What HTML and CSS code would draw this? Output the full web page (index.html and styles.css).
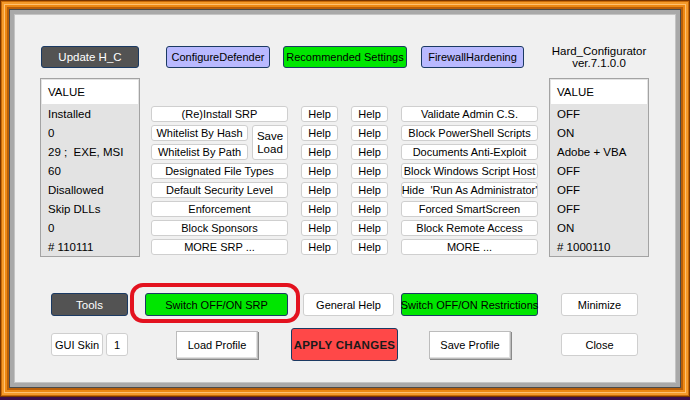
FILE: index.html
```html
<!DOCTYPE html>
<html lang="en">
<head>
    <meta charset="UTF-8">
    <title>Hard_Configurator</title>
    <link rel="stylesheet" href="styles.css">
</head>
<body>
    <div class="window">
        <div class="client">
            <div class="main">
                <div class="btn dark update">Update H_C</div>
                <div class="topbar">
                    <div class="btn lilac w-def">ConfigureDefender</div>
                    <div class="btn green w-rec">Recommended Settings</div>
                    <div class="btn lilac w-fw">FirewallHardening</div>
                </div>
                <div class="title">Hard_Configurator<br>ver.7.1.0.0</div>

                <ul class="list">
                    <li class="head">VALUE</li>
                    <li>Installed</li>
                    <li>0</li>
                    <li>29 ;&nbsp; EXE, MSI</li>
                    <li>60</li>
                    <li>Disallowed</li>
                    <li>Skip DLLs</li>
                    <li>0</li>
                    <li># 110111</li>
                </ul>

                <div class="actions">
                    <div class="btn">(Re)Install SRP</div>
                    <div class="btn">Help</div>
                    <div class="btn">Help</div>
                    <div class="btn">Validate Admin C.S.</div>

                    <div class="wl">
                        <div class="btn">Whitelist By Hash</div>
                        <div class="btn saveload">Save<br>Load</div>
                        <div class="btn">Whitelist By Path</div>
                    </div>
                    <div class="btn">Help</div>
                    <div class="btn">Help</div>
                    <div class="btn">Block PowerShell Scripts</div>
                    <div class="btn">Help</div>
                    <div class="btn">Help</div>
                    <div class="btn">Documents Anti-Exploit</div>

                    <div class="btn">Designated File Types</div>
                    <div class="btn">Help</div>
                    <div class="btn">Help</div>
                    <div class="btn">Block Windows Script Host</div>

                    <div class="btn">Default Security Level</div>
                    <div class="btn">Help</div>
                    <div class="btn">Help</div>
                    <div class="btn">Hide &nbsp;'Run As Administrator'</div>

                    <div class="btn">Enforcement</div>
                    <div class="btn">Help</div>
                    <div class="btn">Help</div>
                    <div class="btn">Forced SmartScreen</div>

                    <div class="btn">Block Sponsors</div>
                    <div class="btn">Help</div>
                    <div class="btn">Help</div>
                    <div class="btn">Block Remote Access</div>

                    <div class="btn">MORE SRP ...</div>
                    <div class="btn">Help</div>
                    <div class="btn">Help</div>
                    <div class="btn">MORE ...</div>
                </div>

                <ul class="list">
                    <li class="head">VALUE</li>
                    <li>OFF</li>
                    <li>ON</li>
                    <li>Adobe + VBA</li>
                    <li>OFF</li>
                    <li>OFF</li>
                    <li>OFF</li>
                    <li>ON</li>
                    <li># 1000110</li>
                </ul>
            </div>

            <div class="bottom">
                <div class="row row-a">
                    <div class="btn dark w-tools">Tools</div>
                    <div class="ringed">
                        <div class="btn green w-srp">Switch OFF/ON SRP</div>
                        <span class="ring"></span>
                    </div>
                    <div class="btn w-help">General Help</div>
                    <div class="btn green w-restr">Switch OFF/ON Restrictions</div>
                    <div class="btn w-min">Minimize</div>
                </div>
                <div class="row row-b">
                    <div class="btn w-skin">GUI Skin</div>
                    <div class="btn w-one">1</div>
                    <div class="btn raised w-load">Load Profile</div>
                    <div class="btn apply">APPLY CHANGES</div>
                    <div class="btn raised w-save">Save Profile</div>
                    <div class="btn w-close">Close</div>
                </div>
            </div>
        </div>
    </div>
</body>
</html>
```

FILE: styles.css
```css
*{
    margin: 0;
    padding: 0;
    box-sizing: border-box;
}
ul{
    list-style: none;
}
body{
    width: 690px;
    height: 400px;
    background-color: #3c0f4a;
    font-family: "Liberation Sans", Arial, sans-serif;
    font-size: 11px;
    color: #000;
    overflow: hidden;
}
/* orange window frame */
.window{
    width: 690px;
    height: 397px;
    padding: 10px;
    background-color: #e88310;
    box-shadow:
        inset 0 0 0 1px #7a3500,
        inset 0 0 0 2px #c86a08,
        inset 0 0 0 4px #f59a2a,
        inset 0 0 0 5px #ffc070,
        inset 0 0 0 7px #ee8812,
        inset 0 0 0 9px #b85e08,
        inset 0 0 0 10px #4a4a4a;
}
.client{
    height: 100%;
    background-color: #f0f0f0;
    border: 4px solid #a9a9a9;
    box-shadow: inset 0 0 0 1px #c4c4c4;
}
.main{
    display: grid;
    grid-template-columns: 100px 387px 100px;
    grid-template-rows: 22px 179px;
    column-gap: 11px;
    row-gap: 10px;
    padding: 32px 0 0 26px;
}
.btn{
    display: flex;
    align-items: center;
    justify-content: center;
    text-align: center;
    white-space: nowrap;
    background-color: #fff;
    border: 1px solid #cfcfcf;
    border-radius: 3px;
    line-height: 12px;
}
.btn.dark{
    background-color: #535353;
    color: #fff;
    border-color: #1b3a63;
}
.btn.lilac{
    background-color: #b9b9ff;
    border-color: #1b3a63;
}
.btn.green{
    background-color: #00e600;
    border-color: #1b3a63;
}
.update{
    margin: 0 1px;
    font-size: 11.5px;
}
.topbar{
    display: flex;
    padding-left: 15px;
    gap: 13px;
}
.w-def{ width: 104px; }
.w-rec{ width: 124px; }
.w-fw{ width: 103px; margin-left: 1px; }
.title{
    text-align: center;
    font-size: 11.5px;
    line-height: 12px;
    margin-top: -1px;
}
.list{
    border: 1px solid #a3a3a3;
    background-color: #e3e3e3;
    padding: 1px;
    font-size: 11.5px;
}
.list li{
    height: 19px;
    line-height: 19px;
    padding-left: 6px;
}
.list .head{
    height: 24px;
    line-height: 24px;
    background-color: #fff;
    margin-bottom: 1px;
}
.actions{
    display: grid;
    grid-template-columns: 137px 37px 37px 137px;
    grid-auto-rows: 16px;
    column-gap: 13px;
    row-gap: 3px;
    margin-top: 28px;
    align-self: start;
}
.wl{
    grid-row: span 2;
    display: grid;
    grid-template-columns: 97px 36px;
    grid-template-rows: 16px 16px;
    column-gap: 4px;
    row-gap: 3px;
}
.saveload{
    grid-row: span 2;
    grid-column: 2;
    line-height: 13px;
    font-size: 11.5px;
    white-space: normal;
}
.wl .btn:nth-child(3){
    grid-column: 1;
    grid-row: 2;
}
.bottom{
    padding: 36px 0 0 37px;
}
.row{
    display: flex;
    align-items: center;
}
.row-a{
    height: 23px;
}
.row-a .btn{
    height: 23px;
}
.row-b{
    height: 33px;
    margin-top: 12px;
}
.row-b .btn{
    height: 23px;
}
.w-tools{ width: 77px; font-size: 11.5px; }
.ringed{
    position: relative;
    margin-left: 17px;
}
.w-srp{ width: 143px; }
.ring{
    position: absolute;
    left: -15px;
    top: -10px;
    right: -12px;
    bottom: -7px;
    border: 4px solid #e3121f;
    border-radius: 13px;
}
.w-help{ width: 91px; margin-left: 15px; }
.w-restr{ width: 137px; margin-left: 7px; }
.w-min{ width: 77px; margin-left: 23px; }
.w-skin{ width: 52px; }
.w-one{ width: 22px; margin-left: 3px; }
.row-b .raised{
    height: 28px;
    border: 1px solid #bcbcbc;
    border-radius: 0;
    box-shadow: 1px 1px 0 #8a8a8a, inset -1px -1px 0 #e0e0e0;
}
.w-load{ width: 82px; margin-left: 48px; }
.row-b .apply{
    width: 107px;
    height: 33px;
    margin-left: 33px;
    background-color: #ff4848;
    border-color: #1b3a63;
    font-weight: bold;
    font-size: 11.5px;
    letter-spacing: 0.3px;
    color: #1a1a1a;
}
.w-save{ width: 82px; margin-left: 31px; }
.w-close{ width: 77px; margin-left: 50px; }
```
